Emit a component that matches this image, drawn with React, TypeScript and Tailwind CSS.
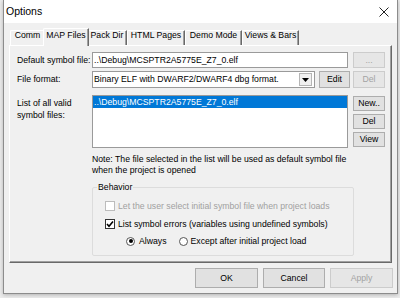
import React from 'react';

const tabs = [
  { label: 'Comm', w: 'w-[35px]' },
  { label: 'MAP Files', w: 'w-[46px]', active: true },
  { label: 'Pack Dir', w: 'w-[40px]' },
  { label: 'HTML Pages', w: 'w-[58px]' },
  { label: 'Demo Mode', w: 'w-[57px]' },
  { label: 'Views & Bars', w: 'w-[57px]' },
];

function Btn({ label, className = '', disabled }: { label: string; className?: string; disabled?: boolean }) {
  return (
    <div
      className={`flex items-center justify-center border ${
        disabled ? 'bg-[#e6e6e6] border-[#cccccc] text-[#a3a3a3]' : 'bg-[#e1e1e1] border-[#adadad] text-black'
      } ${className}`}
    >
      {label}
    </div>
  );
}

function Check({ checked, disabled }: { checked?: boolean; disabled?: boolean }) {
  return (
    <div
      className={`w-[10px] h-[10px] bg-white border flex items-center justify-center ${
        disabled ? 'border-[#bcbcbc]' : 'border-[#333333]'
      }`}
    >
      {checked && (
        <svg width="8" height="8" viewBox="0 0 8 8">
          <polyline points="1,4 3,6.2 7,1.5" fill="none" stroke="#000" strokeWidth="1.6" />
        </svg>
      )}
    </div>
  );
}

function Radio({ checked }: { checked?: boolean }) {
  return (
    <div className="w-[9px] h-[9px] rounded-full bg-white border border-[#555555] flex items-center justify-center">
      {checked && <div className="w-[4px] h-[4px] rounded-full bg-black" />}
    </div>
  );
}

export default function App() {
  return (
    <div className="w-[400px] h-[298px] bg-[#ececec] pl-[3px] font-['Liberation_Sans',Arial,sans-serif] text-[8.7px] leading-[11px] text-black overflow-hidden">
      <div className="w-[395px] h-[294px] flex flex-col border-l border-r border-b border-[#8c8c8c] shadow-[0_1px_4px_rgba(0,0,0,0.25)]">
        {/* Title bar */}
        <div className="h-[23px] bg-white flex items-center justify-between pl-[2px] pr-[8px]">
          <span className="text-[10.5px]">Options</span>
          <svg width="10" height="10" viewBox="0 0 10 10">
            <path d="M0.5 0.5 L9.5 9.5 M9.5 0.5 L0.5 9.5" stroke="#222" strokeWidth="1" />
          </svg>
        </div>

        {/* Body */}
        <div className="flex-1 bg-[#f0f0f0] flex flex-col">
          <div className="ml-[5px] mt-[5px] w-[383px]">
            {/* Tabs */}
            <div className="flex items-end h-[17px] pl-px">
              {tabs.map(t =>
                t.active ? (
                  <div
                    key={t.label}
                    className={`${t.w} h-[18px] -mx-[2px] -mb-px relative z-10 bg-[#f0f0f0] border-t border-l border-white border-r border-r-[#696969] rounded-tl-[2px] shadow-[inset_-1px_0_0_#a0a0a0] flex justify-center pt-[2px] leading-[9px]`}
                  >
                    {t.label}
                  </div>
                ) : (
                  <div
                    key={t.label}
                    className={`${t.w} h-[15px] border-t border-l border-white border-r border-r-[#696969] rounded-tl-[2px] shadow-[inset_-1px_0_0_#a0a0a0] flex justify-center leading-[9px]`}
                  >
                    {t.label}
                  </div>
                )
              )}
            </div>

            {/* Pane */}
            <div className="h-[218px] border-t border-l border-white border-r border-b border-r-[#696969] border-b-[#696969] shadow-[inset_-1px_-1px_0_#a0a0a0] pl-[7px] pt-[6px] flex flex-col">
              {/* Default symbol file */}
              <div className="flex items-center h-[16px]">
                <div className="w-[75px]">Default symbol file:</div>
                <div className="w-[256px] h-[16px] bg-white border border-[#9a9a9a] flex items-center pl-[1px] whitespace-nowrap">
                  ..\Debug\MCSPTR2A5775E_Z7_0.elf
                </div>
                <Btn label="..." disabled className="ml-[5px] w-[32px] h-[16px]" />
              </div>

              {/* File format */}
              <div className="flex items-center h-[17px] mt-[3px]">
                <div className="w-[75px]">File format:</div>
                <div className="w-[223px] h-[17px] bg-white border border-[#9a9a9a] flex items-center justify-between pl-[1px] pr-[2px] whitespace-nowrap">
                  <span>Binary ELF with DWARF2/DWARF4 dbg format.</span>
                  <div className="w-[13px] h-[13px] bg-[#f0f0f0] border border-[#b5b5b5] flex items-center justify-center">
                    <svg width="7" height="4" viewBox="0 0 7 4">
                      <polygon points="0,0 7,0 3.5,4" fill="#000" />
                    </svg>
                  </div>
                </div>
                <Btn label="Edit" className="ml-[4px] w-[31px] h-[17px]" />
                <Btn label="Del" disabled className="ml-[3px] w-[32px] h-[17px]" />
              </div>

              {/* List of symbol files */}
              <div className="flex mt-[7px]">
                <div className="w-[75px] pt-[2px] leading-[12px]">
                  List of all valid
                  <br />
                  symbol files:
                </div>
                <div className="w-[256px] h-[53px] bg-white border border-[#9a9a9a]">
                  <div className="h-[12px] bg-[#0078d7] text-white flex items-center pl-[1px] whitespace-nowrap">
                    ..\Debug\MCSPTR2A5775E_Z7_0.elf
                  </div>
                </div>
                <div className="ml-[5px] pt-px flex flex-col gap-[3px]">
                  <Btn label="New.." className="w-[32px] h-[15px]" />
                  <Btn label="Del" className="w-[32px] h-[15px]" />
                  <Btn label="View" className="w-[32px] h-[15px]" />
                </div>
              </div>

              {/* Note */}
              <div className="ml-[75px] mt-[6px] whitespace-nowrap">
                Note: The file selected in the list will be used as default symbol file
                <br />
                when the project is opened
              </div>

              {/* Behavior */}
              <fieldset className="ml-[75px] mt-[6px] w-[262px] border border-[#dcdcdc] rounded-[2px] pb-[8px]">
                <legend className="ml-[4px] px-[1px]">Behavior</legend>
                <div className="flex items-center h-[12px] mt-[7px] pl-[12px]">
                  <Check disabled />
                  <span className="ml-[3px] text-[#a0a0a0] whitespace-nowrap">
                    Let the user select initial symbol file when project loads
                  </span>
                </div>
                <div className="flex items-center h-[12px] mt-[6px] pl-[12px]">
                  <Check checked />
                  <span className="ml-[3px] whitespace-nowrap">List symbol errors (variables using undefined symbols)</span>
                </div>
                <div className="flex items-center h-[12px] mt-[5px] pl-[33px]">
                  <Radio checked />
                  <span className="ml-[4px]">Always</span>
                  <div className="ml-[12px]">
                    <Radio />
                  </div>
                  <span className="ml-[3px] whitespace-nowrap">Except after initial project load</span>
                </div>
              </fieldset>
            </div>
          </div>

          {/* Dialog buttons */}
          <div className="flex justify-end gap-[5px] mt-[5px] pr-[4px]">
            <Btn label="OK" className="w-[63px] h-[20px]" />
            <Btn label="Cancel" className="w-[62px] h-[20px]" />
            <Btn label="Apply" disabled className="w-[63px] h-[20px]" />
          </div>
        </div>
      </div>
    </div>
  );
}
